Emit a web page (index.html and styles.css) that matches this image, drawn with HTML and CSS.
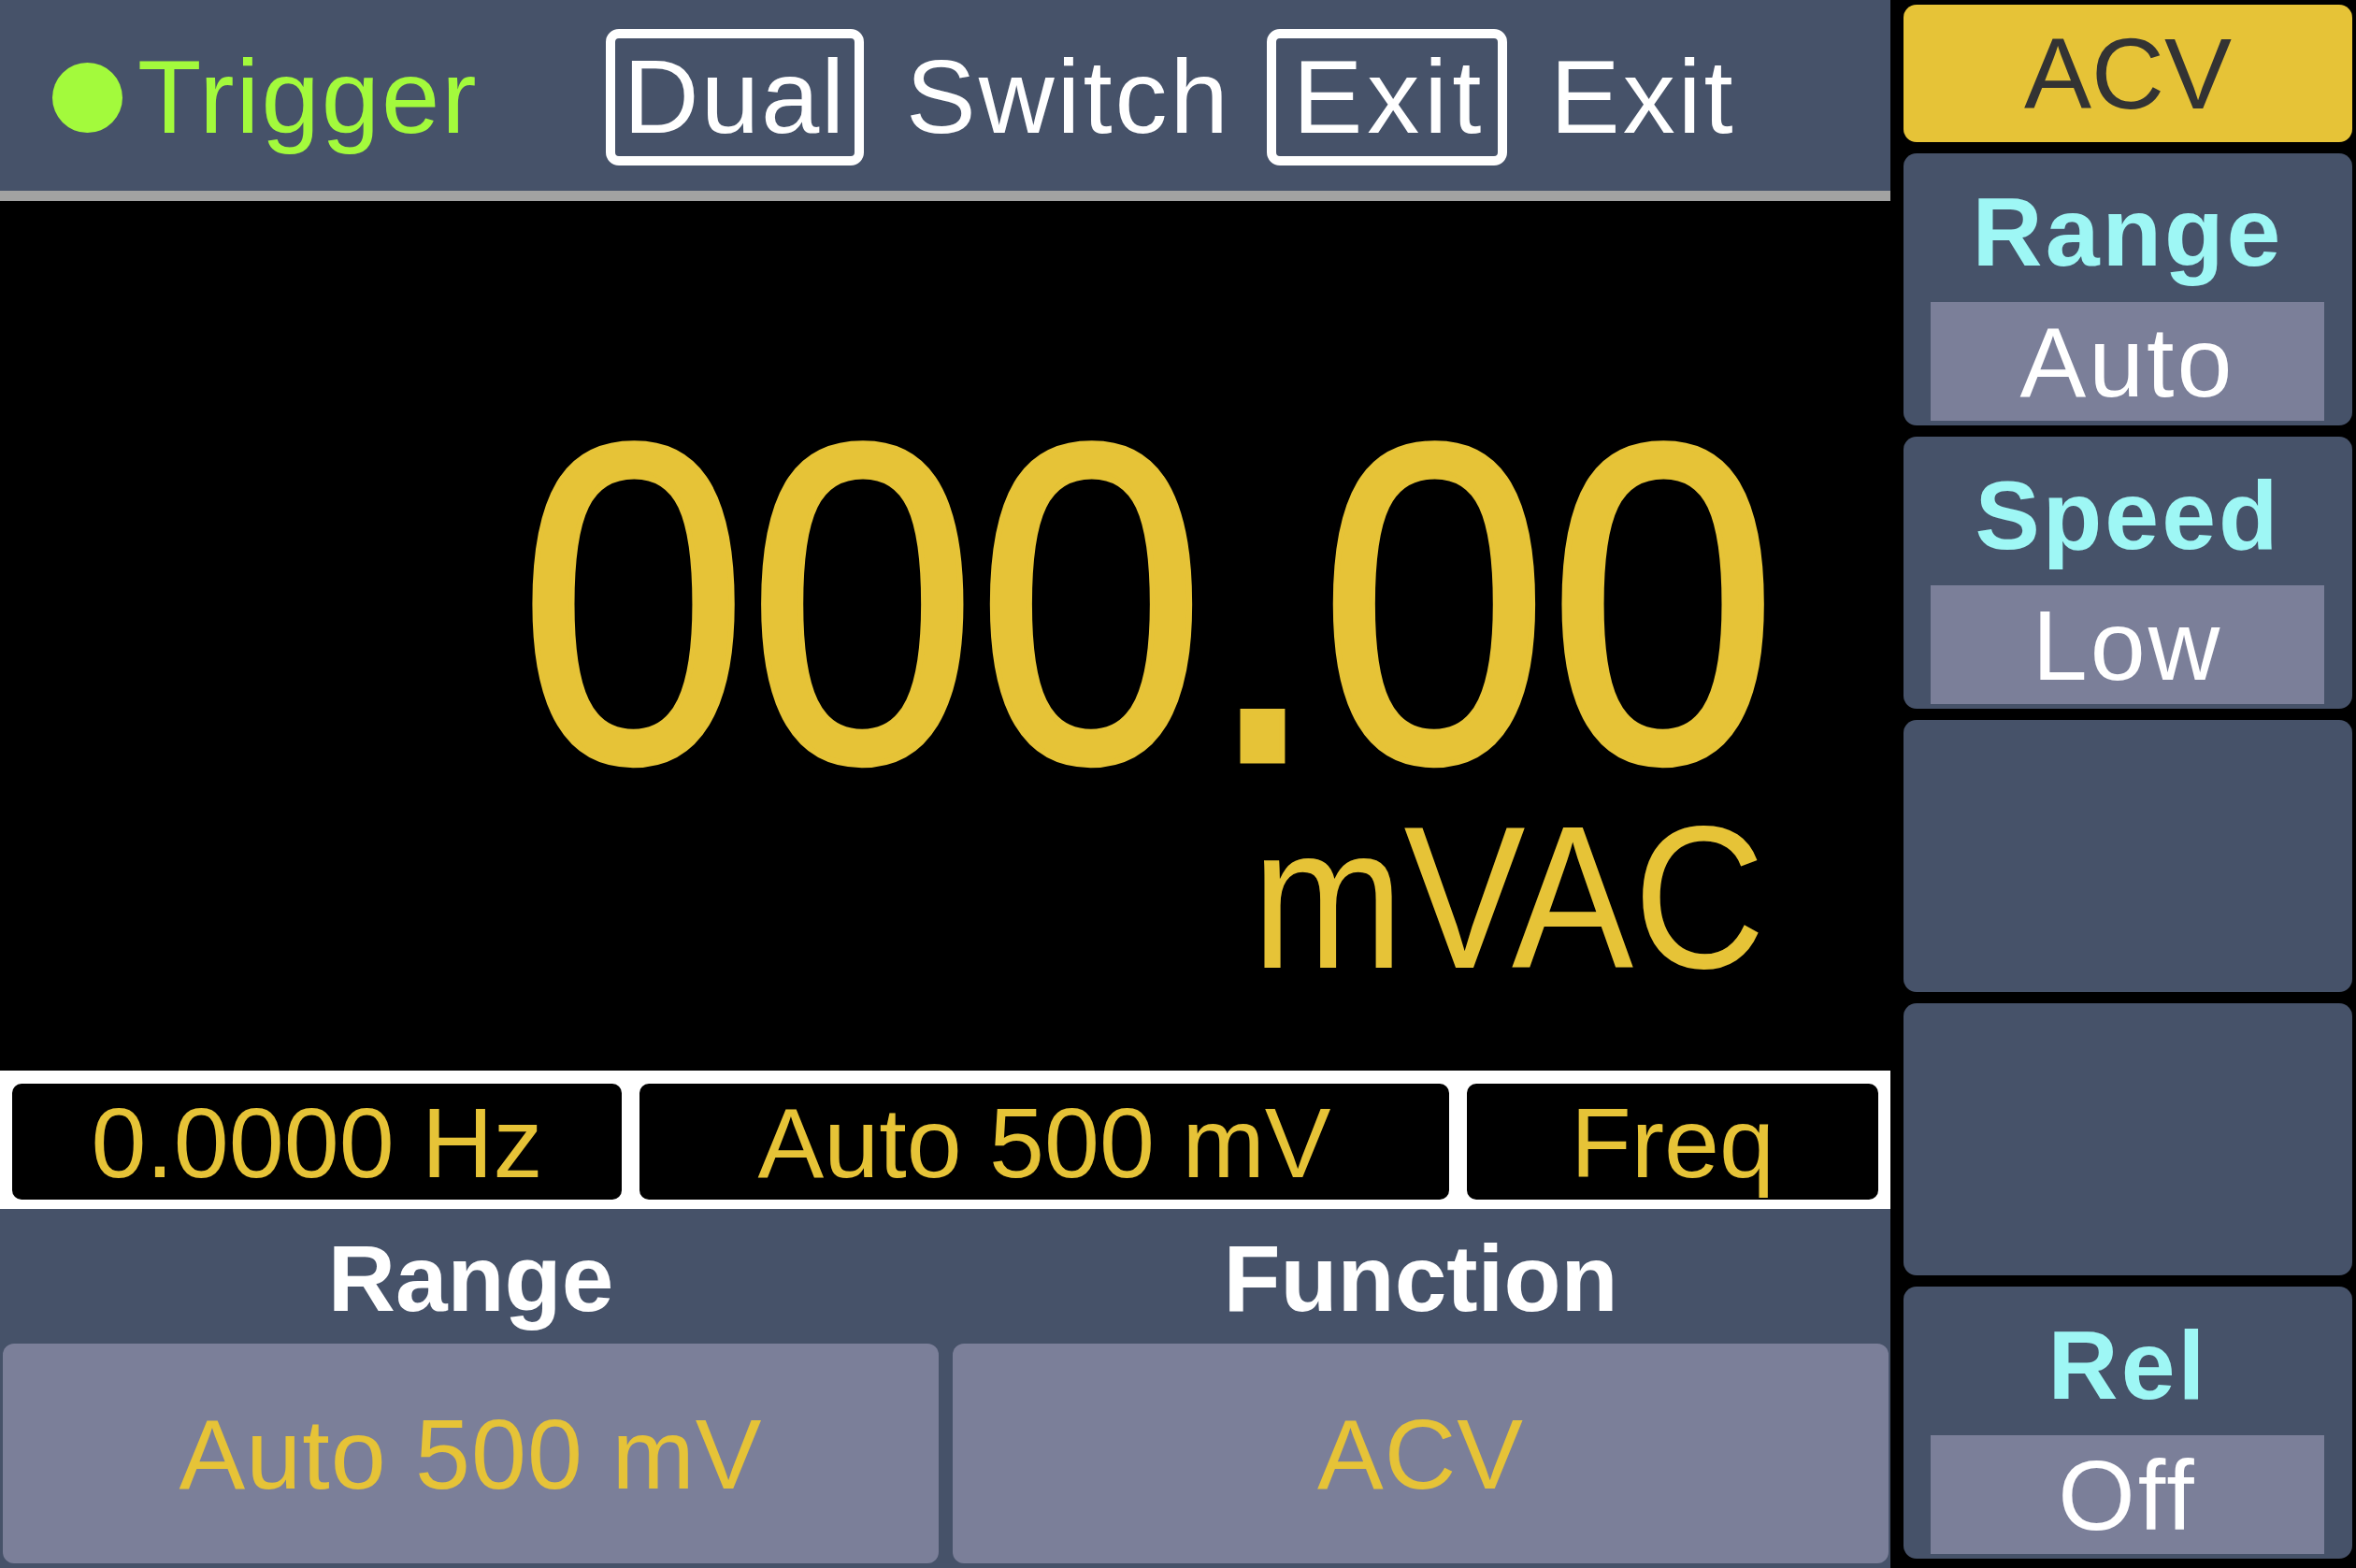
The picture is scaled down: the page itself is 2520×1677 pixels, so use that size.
FILE: index.html
```html
<!DOCTYPE html>
<html lang="en">
<head>
<meta charset="utf-8">
<title>ACV Meter</title>
<link rel="stylesheet" href="styles.css">
</head>
<body>
<div class="screen">
  <div class="main">
    <header class="topbar">
      <div class="trigger"><span class="dot"></span><span class="trig-text">Trigger</span></div>
      <span class="key key-dual">Dual</span>
      <span class="key-label label-switch">Switch</span>
      <span class="key key-exit">Exit</span>
      <span class="key-label label-exit">Exit</span>
    </header>
    <section class="display">
      <div class="reading">000.00</div>
      <div class="unit">mVAC</div>
    </section>
    <section class="infostrip">
      <div class="info">0.0000 Hz</div>
      <div class="info">Auto 500 mV</div>
      <div class="info">Freq</div>
    </section>
    <section class="bottom">
      <div class="bcol">
        <div class="blabel">Range</div>
        <div class="bbtn">Auto 500 mV</div>
      </div>
      <div class="bcol">
        <div class="blabel">Function</div>
        <div class="bbtn">ACV</div>
      </div>
    </section>
  </div>
  <aside class="side">
    <div class="sbtn active">ACV</div>
    <div class="sbox">
      <div class="slabel">Range</div>
      <div class="svalue">Auto</div>
    </div>
    <div class="sbox">
      <div class="slabel">Speed</div>
      <div class="svalue">Low</div>
    </div>
    <div class="sbox"></div>
    <div class="sbox"></div>
    <div class="sbox">
      <div class="slabel">Rel</div>
      <div class="svalue">Off</div>
    </div>
  </aside>
</div>
</body>
</html>
```
FILE: styles.css
```css
html, body {
  margin: 0;
  padding: 0;
  background: #000;
}
body {
  width: 2520px;
  height: 1677px;
  overflow: hidden;
  font-family: "Liberation Sans", Arial, Helvetica, sans-serif;
}
.screen {
  display: grid;
  grid-template-columns: 2022px 498px;
  width: 2520px;
  height: 1677px;
  background: #000;
}
.main {
  display: flex;
  flex-direction: column;
  height: 1677px;
}

/* top bar */
.topbar {
  box-sizing: content-box;
  height: 200px;
  padding-top: 4px;
  border-bottom: 11px solid #a2a2a2;
  background: #465269;
  display: flex;
  align-items: center;
  color: #fff;
  font-size: 112px;
  letter-spacing: 2px;
}
.trigger {
  flex: none;
  width: 592px;
  display: flex;
  align-items: center;
  margin-left: 56px;
  color: #a3fa3c;
}
.dot {
  flex: none;
  width: 75px;
  height: 75px;
  border-radius: 50%;
  background: #a3fa3c;
  margin-right: 16px;
}
.trig-text {
  line-height: 1;
  letter-spacing: 2px;
}
.key {
  flex: none;
  box-sizing: border-box;
  height: 146px;
  border: 10px solid #fff;
  border-radius: 14px;
  display: flex;
  align-items: center;
  justify-content: center;
  line-height: 1;
}
.key-dual { width: 276px; }
.key-exit { width: 257px; letter-spacing: 5px; padding-left: 5px; }
.key-label {
  flex: none;
  line-height: 1;
  box-sizing: border-box;
}
.label-switch {
  width: 431px;
  padding-left: 45px;
  letter-spacing: 3px;
}
.label-exit {
  padding-left: 46px;
  letter-spacing: 3px;
}

/* main display */
.display {
  height: 930px;
  box-sizing: border-box;
  padding-top: 256px;
  padding-right: 121px;
  display: flex;
  flex-direction: column;
  align-items: flex-end;
  color: #e6c337;
}
.reading {
  font-size: 440px;
  line-height: 380px;
  height: 380px;
  transform: scaleY(1.102);
  transform-origin: 50% 341px;
  -webkit-text-stroke: 6px #e6c337;
}
.unit {
  font-size: 195px;
  line-height: 170px;
  height: 170px;
  margin-top: 31px;
  margin-right: 13px;
  transform: scaleY(1.115);
  transform-origin: 50% 152px;
}

/* info strip */
.infostrip {
  height: 148px;
  box-sizing: border-box;
  background: #fff;
  padding: 14px 13px 10px;
  display: grid;
  grid-template-columns: 652px 866px 1fr;
  column-gap: 19px;
}
.info {
  background: #000;
  border-radius: 10px;
  color: #e6c337;
  font-size: 106px;
  display: flex;
  align-items: center;
  justify-content: center;
  line-height: 1;
  padding-top: 2px;
}

/* bottom area */
.bottom {
  height: 384px;
  box-sizing: border-box;
  background: #465269;
  padding: 0 2px 5px 3px;
  display: grid;
  grid-template-columns: 1001px 1001px;
  column-gap: 15px;
}
.bcol {
  display: flex;
  flex-direction: column;
}
.blabel {
  height: 144px;
  display: flex;
  align-items: center;
  justify-content: center;
  color: #fff;
  font-weight: bold;
  font-size: 100px;
  line-height: 1;
  padding-top: 4px;
  box-sizing: border-box;
}
.bbtn {
  flex: 1;
  background: #7b7f99;
  border-radius: 12px;
  display: flex;
  align-items: center;
  justify-content: center;
  color: #e6c337;
  font-size: 106px;
  line-height: 1;
  letter-spacing: 1px;
}

/* side panel */
.side {
  display: flex;
  flex-direction: column;
  gap: 12px;
  padding: 5px 4px 10px 14px;
  box-sizing: border-box;
  height: 1677px;
}
.sbtn {
  height: 147px;
  border-radius: 14px;
  display: flex;
  align-items: center;
  justify-content: center;
  font-size: 108px;
  line-height: 1;
}
.sbtn.active {
  background: #e6c337;
  color: #333;
}
.sbox {
  height: 291px;
  background: #465269;
  border-radius: 14px;
  display: flex;
  flex-direction: column;
}
.slabel {
  flex: 1;
  display: flex;
  align-items: center;
  justify-content: center;
  color: #9ef7f5;
  font-weight: bold;
  font-size: 104px;
  letter-spacing: 3px;
  line-height: 1;
  padding-top: 8px;
}
.svalue {
  height: 127px;
  margin: 0 30px 5px 29px;
  background: #7b7f99;
  display: flex;
  align-items: center;
  justify-content: center;
  color: #fff;
  font-size: 106px;
  letter-spacing: 3px;
  line-height: 1;
}
```
